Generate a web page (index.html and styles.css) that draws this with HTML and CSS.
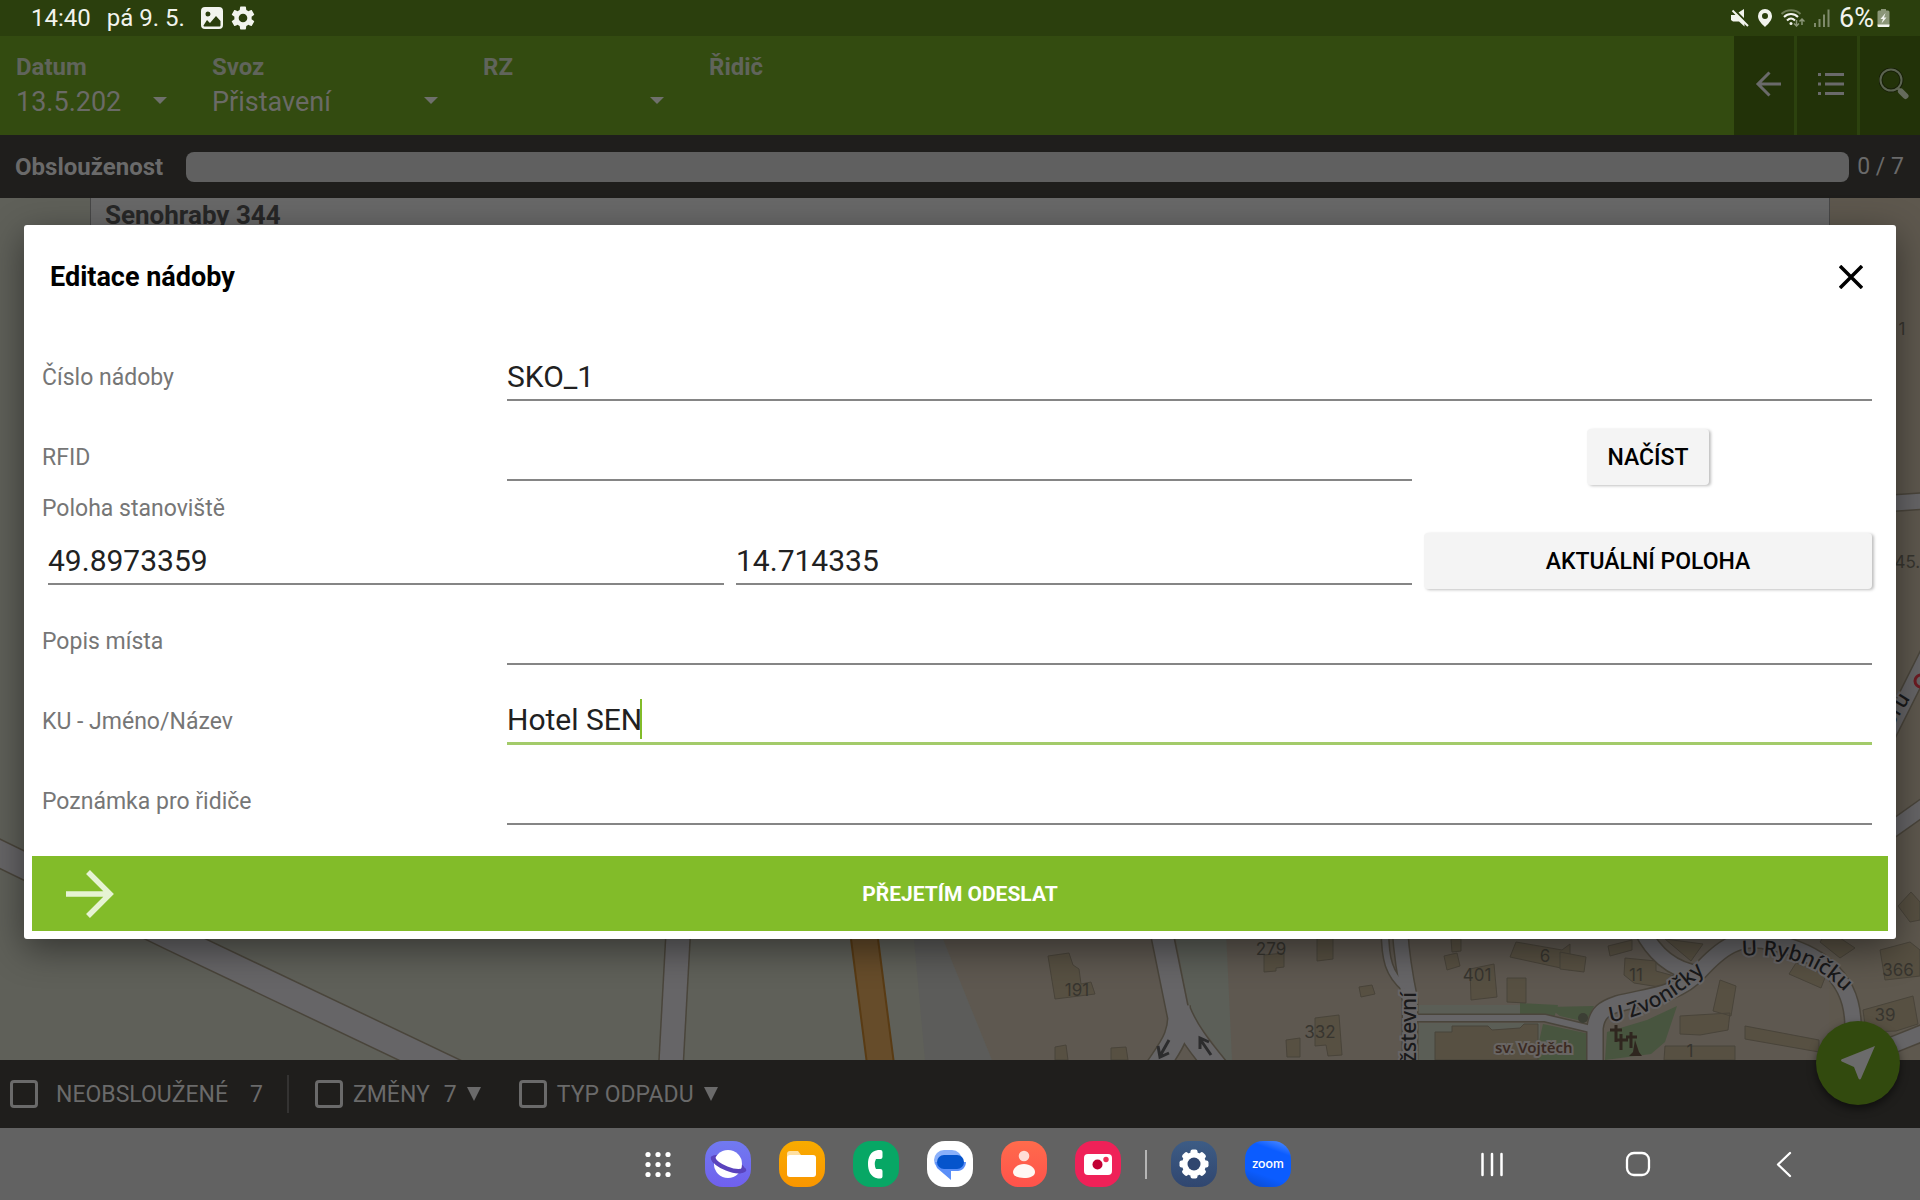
FILE: index.html
```html
<!DOCTYPE html>
<html lang="cs">
<head>
    <meta charset="UTF-8">
    <meta name="viewport" content="width=device-width, initial-scale=1.0">
    <title>Editace nádoby</title>
    <link rel="stylesheet" href="styles.css">
</head>
<body>
    <div class="status">
        <span class="time">14:40</span>
        <span class="date">pá 9. 5.</span>
        <svg width="22" height="22" viewBox="0 0 22 22"><path fill="#f2f4ee" fill-rule="evenodd" d="M4 0h14a4 4 0 0 1 4 4v14a4 4 0 0 1-4 4H4a4 4 0 0 1-4-4V4a4 4 0 0 1 4-4zM7 4.500a2.500 2.500 0 1 0 0 5 2.500 2.500 0 0 0 0-5zM2.500 18.500c0 .6.500 1 1 1h15c.6 0 1-.4 1-1V14l-4.500-5-6 7-3-3z"/></svg>
        <svg class="gear" width="24" height="24" viewBox="2 2 20 20"><path fill="#f2f4ee" d="M19.140 12.940c.04-.3.060-.61.060-.94s-.02-.64-.07-.94l2.030-1.580c.18-.14.230-.41.120-.61l-1.920-3.320c-.12-.22-.37-.29-.59-.22l-2.390.96c-.5-.38-1.030-.7-1.620-.94l-.36-2.540c-.04-.24-.24-.41-.48-.41h-3.840c-.24 0-.43.170-.47.410l-.36 2.540c-.59.240-1.130.570-1.620.940l-2.390-.96c-.22-.08-.47 0-.59.220L2.740 8.870c-.12.210-.08.470.120.610l2.030 1.580c-.05.3-.09.630-.09.940s.02.640.070.940l-2.030 1.580c-.18.140-.23.410-.12.610l1.920 3.320c.12.220.370.290.590.220l2.390-.96c.5.380 1.030.7 1.620.940l.36 2.540c.05.240.240.410.480.410h3.840c.24 0 .44-.17.470-.41l.36-2.540c.59-.24 1.130-.56 1.620-.94l2.390.96c.22.080.470 0 .59-.22l1.920-3.320c.12-.22.070-.47-.12-.61l-2.010-1.580zM12 15.600a3.600 3.600 0 1 1 0-7.200 3.600 3.600 0 0 1 0 7.200z"/></svg>
        <div class="status-right">
            <svg width="18" height="18" viewBox="0 0 18 18"><path fill="#f2f4ee" d="M0 6h4l1.500-1.300L13.500 13v4.500L8 12.500H2L0 11zM7.500 3.500L13 0v9z"/><path stroke="#f2f4ee" stroke-width="2" d="M1.500 1.500L17 17"/></svg>
            <svg width="16" height="18" viewBox="0 0 16 18"><path fill="#f2f4ee" fill-rule="evenodd" d="M8 0a7 7 0 0 1 7 7c0 4.500-4 8-7 11-3-3-7-6.500-7-11a7 7 0 0 1 7-7zM8 4a3 3 0 1 0 0 6 3 3 0 0 0 0-6z"/></svg>
            <svg width="24" height="18" viewBox="0 0 24 18" fill="none"><path stroke="#6f7d57" stroke-width="2" d="M0.500 5c5-5 14-5 19 0"/><path stroke="#f2f4ee" stroke-width="2" d="M3 8c4-4 10-4 14 0M6 11.500c2.500-2.500 5.500-2.500 8 0"/><circle cx="10" cy="14.500" r="1.500" fill="#f2f4ee"/><path stroke="#8b9678" stroke-width="1.500" d="M15.500 11v6m-2.500-2.500l2.500 2.500 2.500-2.500M21 16v-6m-2.500 2.500L21 10l2.500 2.500"/></svg>
            <svg width="18" height="18" viewBox="0 0 18 18" fill="#7f8b6b"><path d="M1 14h2v4H1zM5.500 10h2v8h-2zM10 5.500h2V18h-2zM14.500 0.500h2V18h-2z"/></svg>
            <span class="battery-text">6%</span>
            <svg width="13" height="18" viewBox="0 0 13 18"><path fill="#8b9678" d="M4 0h5v1.500h2a1.500 1.500 0 0 1 1.500 1.500v13H.5V3A1.500 1.500 0 0 1 2 1.500h2z"/><path fill="#f2f4ee" d="M.5 15.500h12v1.500a1 1 0 0 1-1 1h-10a1 1 0 0 1-1-1zM8.500 4L3.500 10h2.500L4.500 14.500 9.500 8.500H7z"/></svg>
        </div>
    </div>

    <header class="header">
        <div class="filter filter-date">
            <label for="datum">Datum</label>
            <select id="datum"><option>13.5.202</option></select>
        </div>
        <div class="filter filter-route">
            <label for="svoz">Svoz</label>
            <select id="svoz"><option>Přistavení</option></select>
        </div>
        <div class="filter filter-plate">
            <label for="rz">RZ</label>
            <select id="rz"><option></option></select>
        </div>
        <div class="filter filter-driver"><span>Řidič</span></div>
        <div class="actions">
            <button type="button" aria-label="Zpět">
                <svg width="26" height="26" viewBox="0 0 26 26" fill="none" stroke="#6a6a6a" stroke-width="3"><path d="M26 13H3M14.500 1.500L3 13l11.500 11.500"/></svg>
            </button>
            <button type="button" aria-label="Seznam">
                <svg width="26" height="24" viewBox="0 0 26 24" fill="#6a6a6a"><path d="M0 1h3v3H0zM7 1h19v3H7zM0 10.500h3v3H0zM7 10.500h19v3H7zM0 20h3v3H0zM7 20h19v3H7z"/></svg>
            </button>
            <button type="button" aria-label="Hledat">
                <svg width="30" height="32" viewBox="0 0 30 32" fill="none"><circle cx="12" cy="12" r="10.500" stroke="#171f08" stroke-width="4"/><circle cx="12" cy="12" r="10.500" stroke="#5b6350" stroke-width="2"/><path stroke="#5b6350" stroke-width="3" d="M18.500 20l3 3"/><path stroke="#656b5c" stroke-width="6" stroke-linecap="round" d="M22 23.500l4.500 4.500"/></svg>
            </button>
        </div>
    </header>

    <div class="progress">
        <label for="served">Obslouženost</label>
        <progress id="served" value="0" max="7"></progress>
        <span>0 / 7</span>
    </div>

    <main class="map">
        <svg class="map-canvas" viewBox="0 198 1920 862" preserveAspectRatio="xMidYMid slice">
            <rect y="198" width="1920" height="862" fill="#5f6059"/>
            <!-- zones -->
            <path fill="#5c5c5a" d="M880 800L943 939l49 121h-67l-11-121z"/>
            <path fill="#5e5850" d="M920 880h1000v180H992l-49-121z"/>
            <path fill="#5c5f58" d="M1174 930h52l6 130h-6l-36-48z"/>
            <path fill="#5e584e" d="M1829 198h91v862h-91z"/>
            <path fill="#5b5e56" d="M1418 1005h102v11h-102zM1418 1023h122v37h-122z"/>
            <path fill="#48553f" d="M1520 1003l38 2-4 13-34-2zM1543 1024l47 10v26h-52v-14zM1548 1007l46-1-8 16-26-6zM1607 1032l40-12 30-14-12 36-14 12-46 6z"/>
            <!-- houses -->
            <g fill="#575042" stroke="#49443a" stroke-width="1">
                <path d="M1048 956l21-3 4 12 6 4 2 15 10-2 4 12-40 5zM1055 1047l11-2 2 15h-13zM1111 1048l15-1 2 13h-17z"/>
                <path d="M1264 955l20-2v14l-8 1v3l-12 1zM1317 936l16-1v24l-16 2zM1359 987l13-2 3 9-14 3zM1315 1018l24-3 3 40-14 1-2-11-11 1zM1286 1040l14-2v19h-13z"/>
                <path d="M1444 956l13-3 3 13-13 4zM1451 939h10v12l-9 1zM1470 969l24-5 3 33-26 3zM1507 978h19v25l-19-1zM1516 942l46 8 8-6v26l-60-13z"/>
                <path d="M1435 1032h17v-6h36l4 4 28-2 4-4h14v36h-103z"/>
                <path d="M1560 952l26 5-2 15-24-3zM1608 946l24-6v10l-22 6zM1625 958l31 3v10l22 6-6 12-38-6-10-8zM1665 939l38 5-12 17zM1720 980l16 6-5 30-18-5zM1680 1016l50-3-2 17-28 5-20-1zM1665 1046h70v14h-71zM1745 1026l74 14v12l-74-13zM1796 963l30 12-5 13-32-14zM1828 930l27 18-15 10-20-16zM1880 950l30-8 10 8v26l-35 4zM1863 1010l50-14 5 28-22 7-30 1zM1898 906l13-14 9 10v18l-10 2z"/>
            </g>
            <!-- streets -->
            <g fill="none" stroke="#4a453b" stroke-width="26">
                <path d="M-10 849L173 938l292 139" stroke-width="28"/>
                <path d="M680 900l-9 165"/>
                <path d="M1155 900l24 118m0-12c2 30-8 40-24 64m24-60c8 20 20 36 40 60" stroke-width="24"/>
                <path d="M1400 930q2 32 10 70v70" stroke-width="17"/>
                <path d="M1385 930c0 30 4 44 20 58" stroke-width="9"/>
                <path d="M1415 1018h130l50 12" stroke-width="9"/>
                <path d="M1642 930c10 20 28 40 58 44M1595 1062v-34c2-16 10-20 22-24 30-8 60-8 82-32 22-24 40-38 72-30 40 8 82 30 82 84" stroke-width="18"/>
                <path d="M1880 504l45-3M1870 770l60-120M1880 838l45-32M1890 1046l35-14" stroke-width="18"/>
            </g>
            <g fill="none" stroke="#666567" stroke-width="23">
                <path d="M-10 849L173 938l292 139" stroke-width="25"/>
                <path d="M680 900l-9 165"/>
                <path d="M1155 900l24 118m0-12c2 30-8 40-24 64m24-60c8 20 20 36 40 60" stroke-width="21"/>
                <path d="M1400 930q2 32 10 70v70" stroke-width="14"/>
                <path d="M1385 930c0 30 4 44 20 58" stroke-width="6"/>
                <path d="M1415 1018h130l50 12" stroke-width="6"/>
                <path d="M1642 930c10 20 28 40 58 44M1595 1062v-34c2-16 10-20 22-24 30-8 60-8 82-32 22-24 40-38 72-30 40 8 82 30 82 84" stroke-width="15"/>
                <path d="M1880 504l45-3M1870 770l60-120M1880 838l45-32M1890 1046l35-14" stroke-width="15"/>
            </g>
            <path fill="#664c2a" stroke="#593b14" stroke-width="2" d="M846 900h27l5 39 16 125h-27z"/>
            <path fill="none" stroke="#2c2c2d" stroke-width="3" d="M1169 1040l-9 16m-2-10l2 11 9-4M1211 1055l-11-16m0 10v-11l9 4"/>
            <!-- graveyard -->
            <path fill="none" stroke="#2f261f" stroke-width="3" d="M1616 1025v17m-6-12h12M1621 1034v16m-5-10h12M1631 1032v16m-5-11h11"/>
            <path fill="#2f261f" d="M1635 1040l4 12 3 4h-13l4-4z"/>
            <circle cx="1583" cy="1018" r="5" fill="#3c3f35"/>
            <circle cx="1921" cy="681" r="6" fill="none" stroke="#6d1b22" stroke-width="3"/>
            <g class="house-no">
                <text x="1077" y="996">191</text>
                <text x="1271" y="955">279</text>
                <text x="1320" y="1038">332</text>
                <text x="1477" y="981">401</text>
                <text x="1545" y="962">6</text>
                <text x="1636" y="981">11</text>
                <text x="1898" y="976">366</text>
                <text x="1885" y="1021">39</text>
                <text x="1690" y="1057">1</text>
                <text x="1902" y="335">1</text>
                <text x="1912" y="568">45.7</text>
            </g>
            <path id="zvonicky" fill="none" d="M1610 1022Q1668 1014 1722 954"/>
            <path id="rybnicku" fill="none" d="M1742 956Q1808 950 1850 998"/>
            <g class="street">
                <text transform="translate(1416 1062) rotate(-90)">žstevní</text>
                <text><textPath href="#zvonicky">U Zvoníčky</textPath></text>
                <text><textPath href="#rybnicku">U Rybníčku</textPath></text>
                <text transform="translate(1892 728) rotate(-58)">oru</text>
            </g>
            <text class="church" x="1495" y="1053">sv. Vojtěch</text>
        </svg>
        <div class="site">Senohraby 344</div>
    </main>

    <footer class="bottom">
        <label class="check check-open"><input type="checkbox"><span>NEOBSLOUŽENÉ</span><span class="count">7</span></label>
        <label class="check"><input type="checkbox"><span>ZMĚNY</span><span class="count">7</span><i class="down"></i></label>
        <label class="check"><input type="checkbox"><span>TYP ODPADU</span><i class="down"></i></label>
        <button type="button" class="locate" aria-label="Moje poloha">
            <svg width="34" height="34" viewBox="0 0 34 34"><path fill="#6b6b6b" d="M34 0L20 32.500q-1 2-2.500 0L13 21 0.800 15.500q-1.500-1 0-2.200z"/></svg>
        </button>
    </footer>

    <nav class="navbar">
        <div class="apps">
            <button type="button" aria-label="Aplikace">
                <svg width="42" height="46" viewBox="0 0 42 46" fill="#fff"><circle cx="13" cy="13.500" r="2.600"/><circle cx="23" cy="13.500" r="2.600"/><circle cx="33" cy="13.500" r="2.600"/><circle cx="13" cy="23.500" r="2.600"/><circle cx="23" cy="23.500" r="2.600"/><circle cx="33" cy="23.500" r="2.600"/><circle cx="13" cy="33.500" r="2.600"/><circle cx="23" cy="33.500" r="2.600"/><circle cx="33" cy="33.500" r="2.600"/></svg>
            </button>
            <button type="button" class="app internet" aria-label="Internet">
                <svg width="46" height="46" viewBox="0 0 46 46"><ellipse cx="23" cy="23" rx="18" ry="7" transform="rotate(22 23 23)" fill="#5a43bd"/><circle cx="23" cy="23" r="14" fill="#fff"/><path fill="none" stroke="#5a43bd" stroke-width="4.500" stroke-linecap="round" d="M8 17c3 8 23 16 31 12"/></svg>
            </button>
            <button type="button" class="app files" aria-label="Soubory">
                <svg width="46" height="46" viewBox="0 0 46 46"><path fill="#ffdfa0" d="M8 13a3 3 0 0 1 3-3h8l3 4v6H8z"/><rect x="8" y="14" width="29" height="22" rx="3" fill="#fff"/></svg>
            </button>
            <button type="button" class="app phone" aria-label="Telefon">
                <svg width="46" height="46" viewBox="0 0 46 46"><path fill="#fff" d="M25 9h2.500a2 2 0 0 1 2 2v5a2 2 0 0 1-2 2H23q-2.500 5 0 10h4.500a2 2 0 0 1 2 2v5.500a2 2 0 0 1-2 2H25C17 36 15 29 15 23s2-13 10-14z"/></svg>
            </button>
            <button type="button" class="app messages" aria-label="Zprávy">
                <svg width="46" height="46" viewBox="0 0 46 46"><rect x="7" y="9" width="28" height="20" rx="10" fill="#8ab0fa"/><path fill="#5b8ff8" d="M8 21h31c0 5-4 9-8 9h-7v9L10 27z"/><rect x="10" y="14" width="27" height="14" rx="7" fill="#0554cc"/></svg>
            </button>
            <button type="button" class="app contacts" aria-label="Kontakty">
                <svg width="46" height="46" viewBox="0 0 46 46"><circle cx="23" cy="15" r="5.300" fill="#ffdcd5"/><path fill="#fff8f3" d="M12 31c0-4 5-8 11-8s11 4 11 8-5 6-11 6-11-2-11-6z"/></svg>
            </button>
            <button type="button" class="app camera" aria-label="Fotoaparát">
                <svg width="46" height="46" viewBox="0 0 46 46"><rect x="9" y="13" width="28" height="21" rx="4" fill="#fff"/><circle cx="22.500" cy="23.500" r="5" fill="#c10034"/><circle cx="31" cy="18.500" r="2.700" fill="#ee2f58"/></svg>
            </button>
            <span class="separator"></span>
            <button type="button" class="app settings" aria-label="Nastavení">
                <svg width="46" height="46" viewBox="0 0 46 46"><g fill="#fff"><rect x="19.500" y="8.500" width="7" height="29" rx="2"/><rect x="19.500" y="8.500" width="7" height="29" rx="2" transform="rotate(45 23 23)"/><rect x="19.500" y="8.500" width="7" height="29" rx="2" transform="rotate(90 23 23)"/><rect x="19.500" y="8.500" width="7" height="29" rx="2" transform="rotate(135 23 23)"/><circle cx="23" cy="23" r="12"/></g><circle cx="23" cy="23" r="6.500" fill="#30466f"/></svg>
            </button>
            <button type="button" class="app zoom">zoom</button>
        </div>
        <div class="keys">
            <button type="button" aria-label="Poslední">
                <svg width="46" height="46" viewBox="0 0 46 46" stroke="#fff" stroke-width="2.500" stroke-linecap="round"><path d="M13.500 13v21M23 13v21M32.500 13v21"/></svg>
            </button>
            <button type="button" aria-label="Domů">
                <svg width="46" height="46" viewBox="0 0 46 46" fill="none" stroke="#fff" stroke-width="2.300"><rect x="12" y="12" width="22" height="22" rx="7"/></svg>
            </button>
            <button type="button" aria-label="Zpět">
                <svg width="46" height="46" viewBox="0 0 46 46" fill="none" stroke="#fff" stroke-width="2.300" stroke-linecap="round" stroke-linejoin="round"><path d="M29 12L17 23.500 29 35"/></svg>
            </button>
        </div>
    </nav>

    <div class="overlay">
        <form class="dialog">
            <div class="dialog-head">
                <h1>Editace nádoby</h1>
                <button type="button" class="close" aria-label="Zavřít">
                    <svg width="24" height="24" viewBox="0 0 24 24" stroke="#000" stroke-width="3.500"><path d="M1 1l22 22M23 1L1 23"/></svg>
                </button>
            </div>
            <div class="row">
                <label for="cislo">Číslo nádoby</label>
                <input id="cislo" type="text" value="SKO_1">
            </div>
            <div class="row row-rfid">
                <label for="rfid">RFID</label>
                <input id="rfid" type="text">
                <button type="button" class="btn">NAČÍST</button>
            </div>
            <div class="row-title" id="poloha">Poloha stanoviště</div>
            <div class="row row-position">
                <input type="text" value="49.8973359" aria-labelledby="poloha">
                <input type="text" value="14.714335" aria-labelledby="poloha">
                <button type="button" class="btn">AKTUÁLNÍ POLOHA</button>
            </div>
            <div class="row">
                <label for="popis">Popis místa</label>
                <input id="popis" type="text">
            </div>
            <div class="row">
                <label for="jmeno">KU - Jméno/Název</label>
                <div class="field">
                    <input id="jmeno" class="active" type="text" value="Hotel SEN">
                    <i class="caret"></i>
                </div>
            </div>
            <div class="row">
                <label for="poznamka">Poznámka pro řidiče</label>
                <input id="poznamka" type="text">
            </div>
            <button type="button" class="submit">
                <svg width="48" height="48" viewBox="0 0 48 48" fill="none" stroke="#e6f3d3" stroke-width="5.500"><path d="M0 24h44M22 2l22 22-22 22"/></svg>
                PŘEJETÍM ODESLAT
            </button>
        </form>
    </div>
</body>
</html>
```
FILE: styles.css
```css
* {
    margin: 0;
    padding: 0;
    box-sizing: border-box;
}
body {
    display: flex;
    flex-direction: column;
    height: 100vh;
    overflow: hidden;
    position: relative;
    background: #1f1e1c;
    font-family: Roboto, "Noto Sans", sans-serif;
    font-size: 23px;
    color: #6a6a6a;
}
button, input, select {
    font: inherit;
    color: inherit;
    border: none;
    background: none;
    outline: none;
}
svg {
    display: block;
    flex: none;
}

/* status bar */
.status {
    display: flex;
    align-items: center;
    height: 36px;
    padding: 0 30px 0 31px;
    background: #2b3f0d;
    font-size: 24px;
    color: #f2f4ee;
}
.date {
    margin: 0 16px;
}
.gear {
    margin-left: 8px;
}
.status-right {
    display: flex;
    align-items: center;
    gap: 8px;
    margin-left: auto;
}
.battery-text {
    margin-right: -5px;
    font-size: 27px;
}

/* filters */
.header {
    display: flex;
    height: 99px;
    background: #334b10;
}
.filter {
    padding: 16px 44px 0 0;
    font-size: 24px;
    font-weight: bold;
    color: #60645b;
}
.filter label, .filter span {
    display: block;
    line-height: 30px;
}
.filter select {
    appearance: none;
    display: block;
    width: 100%;
    height: 40px;
    font-size: 27px;
    font-weight: normal;
    color: #6a6a66;
}
.filter-date, .filter-route, .filter-plate {
    position: relative;
}
.filter-date::after, .filter-route::after, .filter-plate::after {
    content: "";
    position: absolute;
    right: 45px;
    top: 61px;
    border: 7px solid transparent;
    border-top-color: #6f706c;
    border-bottom: none;
}
.filter-date {
    width: 212px;
    padding-left: 16px;
}
.filter-route {
    width: 271px;
}
.filter-plate {
    width: 226px;
}
.actions {
    display: flex;
    gap: 3px;
    margin-left: auto;
    background: #2c420e;
}
.actions button {
    display: flex;
    align-items: center;
    justify-content: center;
    width: 60px;
    padding: 0 0 4px 8px;
    background: #223208;
}

/* progress */
.progress {
    display: flex;
    align-items: center;
    height: 63px;
    padding: 0 16px 0 15px;
}
.progress label {
    margin-right: 23px;
    font-size: 24px;
    font-weight: bold;
}
.progress progress {
    appearance: none;
    flex: 1;
    height: 30px;
    border: none;
    border-radius: 8px;
    overflow: hidden;
    background: #606060;
}
.progress progress::-webkit-progress-bar {
    background: #606060;
}
.progress span {
    margin-left: 8px;
}

/* map */
.map {
    flex: 1;
    min-height: 0;
    position: relative;
}
.map-canvas {
    width: 100%;
    height: 100%;
}
.house-no {
    font: 17px Inter, sans-serif;
    fill: #37352f;
    text-anchor: middle;
}
.street {
    font: 500 21px "Noto Sans", sans-serif;
    fill: #19191a;
    stroke: #676566;
    stroke-width: 4px;
    paint-order: stroke;
}
.church {
    font: 600 15px "Noto Sans", sans-serif;
    fill: #3b2a22;
    stroke: #686563;
    stroke-width: 4px;
    paint-order: stroke;
}
.site {
    position: absolute;
    top: 0;
    left: 90px;
    right: 90px;
    height: 60px;
    padding-left: 14px;
    border: 1px solid #474747;
    border-top: none;
    background: #686868;
    font-size: 26px;
    font-weight: bold;
    line-height: 34px;
    color: #272727;
}

/* bottom filters */
.bottom {
    display: flex;
    align-items: center;
    position: relative;
    height: 68px;
    padding-left: 10px;
    background: #1f1e1c;
}
.check {
    display: flex;
    align-items: center;
    gap: 10px;
    margin-right: 38px;
}
.check input {
    appearance: none;
    width: 28px;
    height: 28px;
    border: 3px solid #6a6a6a;
    border-radius: 4px;
}
.check .count {
    margin-left: 4px;
}
.check-open {
    height: 38px;
    gap: 18px;
    padding-right: 24px;
    margin-right: 26px;
    border-right: 2px solid #343332;
}
.down {
    border: 7px solid transparent;
    border-top: 14px solid #6a6a6a;
    border-bottom: none;
}
.locate {
    display: flex;
    align-items: center;
    justify-content: center;
    position: absolute;
    right: 20px;
    top: -39px;
    width: 84px;
    height: 84px;
    border-radius: 50%;
    background: #324a0e;
    box-shadow: 0 4px 8px rgba(0, 0, 0, 0.5);
}

/* system navigation */
.navbar {
    display: grid;
    grid-template-columns: 1fr auto 1fr;
    align-items: center;
    height: 72px;
    background: #626262;
}
.apps {
    display: flex;
    align-items: center;
    gap: 28px;
    grid-column: 2;
    padding-left: 6px;
}
.app {
    width: 46px;
    height: 46px;
    border-radius: 18px;
}
.internet {
    background: linear-gradient(#717af0, #7060ee);
}
.files {
    background: linear-gradient(#f8ab00, #fa9600);
}
.phone {
    background: #07a765;
}
.messages {
    background: #fff;
}
.contacts {
    background: linear-gradient(#ff6b4c, #ff524b);
}
.camera {
    background: #ef2158;
}
.settings {
    background: linear-gradient(#3d5c85, #30466f);
}
.zoom {
    padding-bottom: 3px;
    background: linear-gradient(20deg, #0b49c8, #0b5cff 30%, #0b5cff 75%, #5b94ff);
    color: #fff;
    font: 600 13px Lato, sans-serif;
}
.separator {
    width: 2px;
    height: 29px;
    margin: 0 -4px;
    background: #b5b5b5;
}
.keys {
    display: flex;
    justify-content: flex-end;
    gap: 100px;
    padding-right: 113px;
}

/* dialog */
.overlay {
    position: absolute;
    top: 36px;
    right: 0;
    bottom: 72px;
    left: 0;
    display: flex;
    align-items: center;
    padding: 0 24px;
}
.dialog {
    flex: 1;
    padding-bottom: 8px;
    border-radius: 3px;
    background: #fff;
    box-shadow: 0 10px 36px rgba(0, 0, 0, 0.45);
}
.dialog-head {
    display: flex;
    align-items: center;
    justify-content: space-between;
    height: 112px;
    padding: 0 33px 8px 26px;
    color: #000;
}
.dialog-head h1 {
    font-size: 27px;
    font-weight: bold;
}
.row {
    display: grid;
    grid-template-columns: 465px 1fr;
    align-items: center;
    height: 80px;
    margin: 0 24px 0 18px;
}
.row label, .row-title {
    color: #767676;
}
.row input {
    width: 100%;
    height: 48px;
    border-bottom: 2px solid #858585;
    font-size: 30px;
    color: #212121;
}
.row input.active {
    border-bottom: 3px solid #a3cb6a;
}
.row-rfid {
    grid-template-columns: 465px 1fr 448px;
}
.row-rfid .btn {
    justify-self: center;
    width: 122px;
}
.row-rfid input {
    width: calc(100% - 12px);
}
.row-title {
    line-height: 24px;
    margin-left: 18px;
}
.row-position {
    grid-template-columns: 1fr 1fr 448px;
    column-gap: 12px;
    padding-left: 6px;
}
.btn {
    height: 56px;
    border-radius: 4px;
    background: #f4f4f4;
    box-shadow: 2px 1px 3px rgba(0, 0, 0, 0.25);
    font-weight: 500;
    color: #000;
}
.field {
    position: relative;
}
.caret {
    position: absolute;
    left: 133px;
    top: 2px;
    width: 2px;
    height: 40px;
    background: #82bc29;
}
.submit {
    display: flex;
    align-items: center;
    justify-content: center;
    position: relative;
    width: calc(100% - 16px);
    height: 75px;
    margin: 15px 8px 0;
    background: #82bc29;
    font-size: 21px;
    font-weight: bold;
    color: #fff;
}
.submit svg {
    position: absolute;
    left: 34px;
}
```
